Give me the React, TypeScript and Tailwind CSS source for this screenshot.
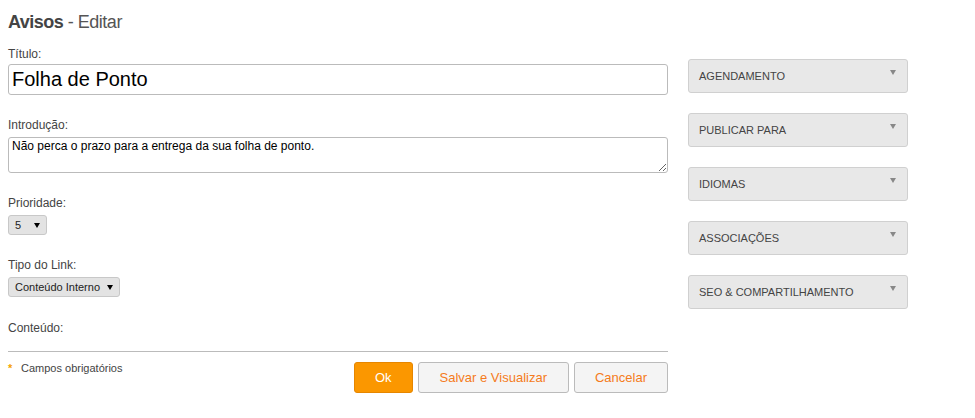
import React from "react";

const panels = [
  "Agendamento",
  "Publicar para",
  "Idiomas",
  "Associações",
  "SEO & Compartilhamento",
];

function Caret({ className }: { className?: string }) {
  return (
    <svg width="6" height="5" viewBox="0 0 6 5" className={className}>
      <path d="M0 0 H6 L3 5 Z" fill="currentColor" />
    </svg>
  );
}

function Field({
  label,
  children,
  className,
  gap = "mt-[4px]",
}: {
  label: string;
  children: React.ReactNode;
  className?: string;
  gap?: string;
}) {
  return (
    <div className={className}>
      <label className="block h-[14px] text-[12px] leading-[14px] text-[#444]">
        {label}
      </label>
      <div className={gap}>{children}</div>
    </div>
  );
}

function FakeSelect({ value, width }: { value: string; width: string }) {
  return (
    <button
      type="button"
      className={`flex h-[20px] items-center justify-between rounded-[3px] border border-[#c8c8c8] bg-[#e3e3e3] pl-[6px] pr-[6px] text-[11px] text-[#222] ${width}`}
    >
      <span>{value}</span>
      <Caret className="text-black" />
    </button>
  );
}

export default function App() {
  return (
    <div className="min-h-[418px] bg-white px-[8px] pt-[10px] font-['Liberation_Sans',Arial,sans-serif]">
      <h1 className="h-[24px] text-[18px] leading-[24px] tracking-[-0.5px] text-[#444]">
        <span className="font-bold">Avisos</span>
        <span className="text-[#555]"> - Editar</span>
      </h1>

      <div className="mt-[13px] flex gap-[20px]">
        <div className="w-[660px]">
          <Field label="Título:" className="mb-[23px]" gap="mt-[3px]">
            <input
              defaultValue="Folha de Ponto"
              className="block h-[31px] w-full rounded-[3px] border border-[#bbb] px-[3px] text-[20px] text-black outline-none"
            />
          </Field>

          <Field label="Introdução:" className="mb-[23px]" gap="mt-[5px]">
            <textarea
              defaultValue="Não perca o prazo para a entrega da sua folha de ponto."
              className="block h-[36px] w-full rounded-[3px] border border-[#bbb] px-[3px] pt-[1px] text-[12px] leading-[14px] text-black outline-none"
            />
          </Field>

          <Field label="Prioridade:" className="mb-[23px]" gap="mt-[5px]">
            <FakeSelect value="5" width="w-[39px]" />
          </Field>

          <Field label="Tipo do Link:" className="mb-[24px]" gap="mt-[5px]">
            <FakeSelect value="Conteúdo Interno" width="w-[112px]" />
          </Field>

          <Field label="Conteúdo:" gap="mt-0">
            <div className="h-[17px] border-b border-[#bbb]" />
          </Field>

          <div className="mt-[10px] flex items-start justify-between">
            <div className="flex items-center text-[11px] leading-[13px] text-[#444]">
              <span className="w-[13px] text-[11px] font-bold text-[#f5a300]">*</span>
              <span>Campos obrigatórios</span>
            </div>
            <div className="flex gap-[5px] text-[13px]">
              <button
                type="button"
                className="h-[31px] rounded-[3px] border border-[#e68600] bg-[#fb9700] px-[20px] text-white"
              >
                Ok
              </button>
              <button
                type="button"
                className="h-[31px] rounded-[3px] border border-[#bbb] bg-[#f4f4f4] px-[21px] text-[#f47b20]"
              >
                Salvar e Visualizar
              </button>
              <button
                type="button"
                className="h-[31px] rounded-[3px] border border-[#bbb] bg-[#f4f4f4] px-[20px] text-[#f47b20]"
              >
                Cancelar
              </button>
            </div>
          </div>
        </div>

        <div className="flex w-[220px] flex-col gap-[20px] pt-[12px]">
          {panels.map((p) => (
            <div
              key={p}
              className="flex h-[34px] justify-between rounded-[3px] border border-[#d0d0d0] bg-[#e8e8e8] pl-[10px] pr-[11px]"
            >
              <span className="self-center text-[11px] uppercase text-[#444]">{p}</span>
              <Caret className="mt-[10px] text-[#888]" />
            </div>
          ))}
        </div>
      </div>
    </div>
  );
}
